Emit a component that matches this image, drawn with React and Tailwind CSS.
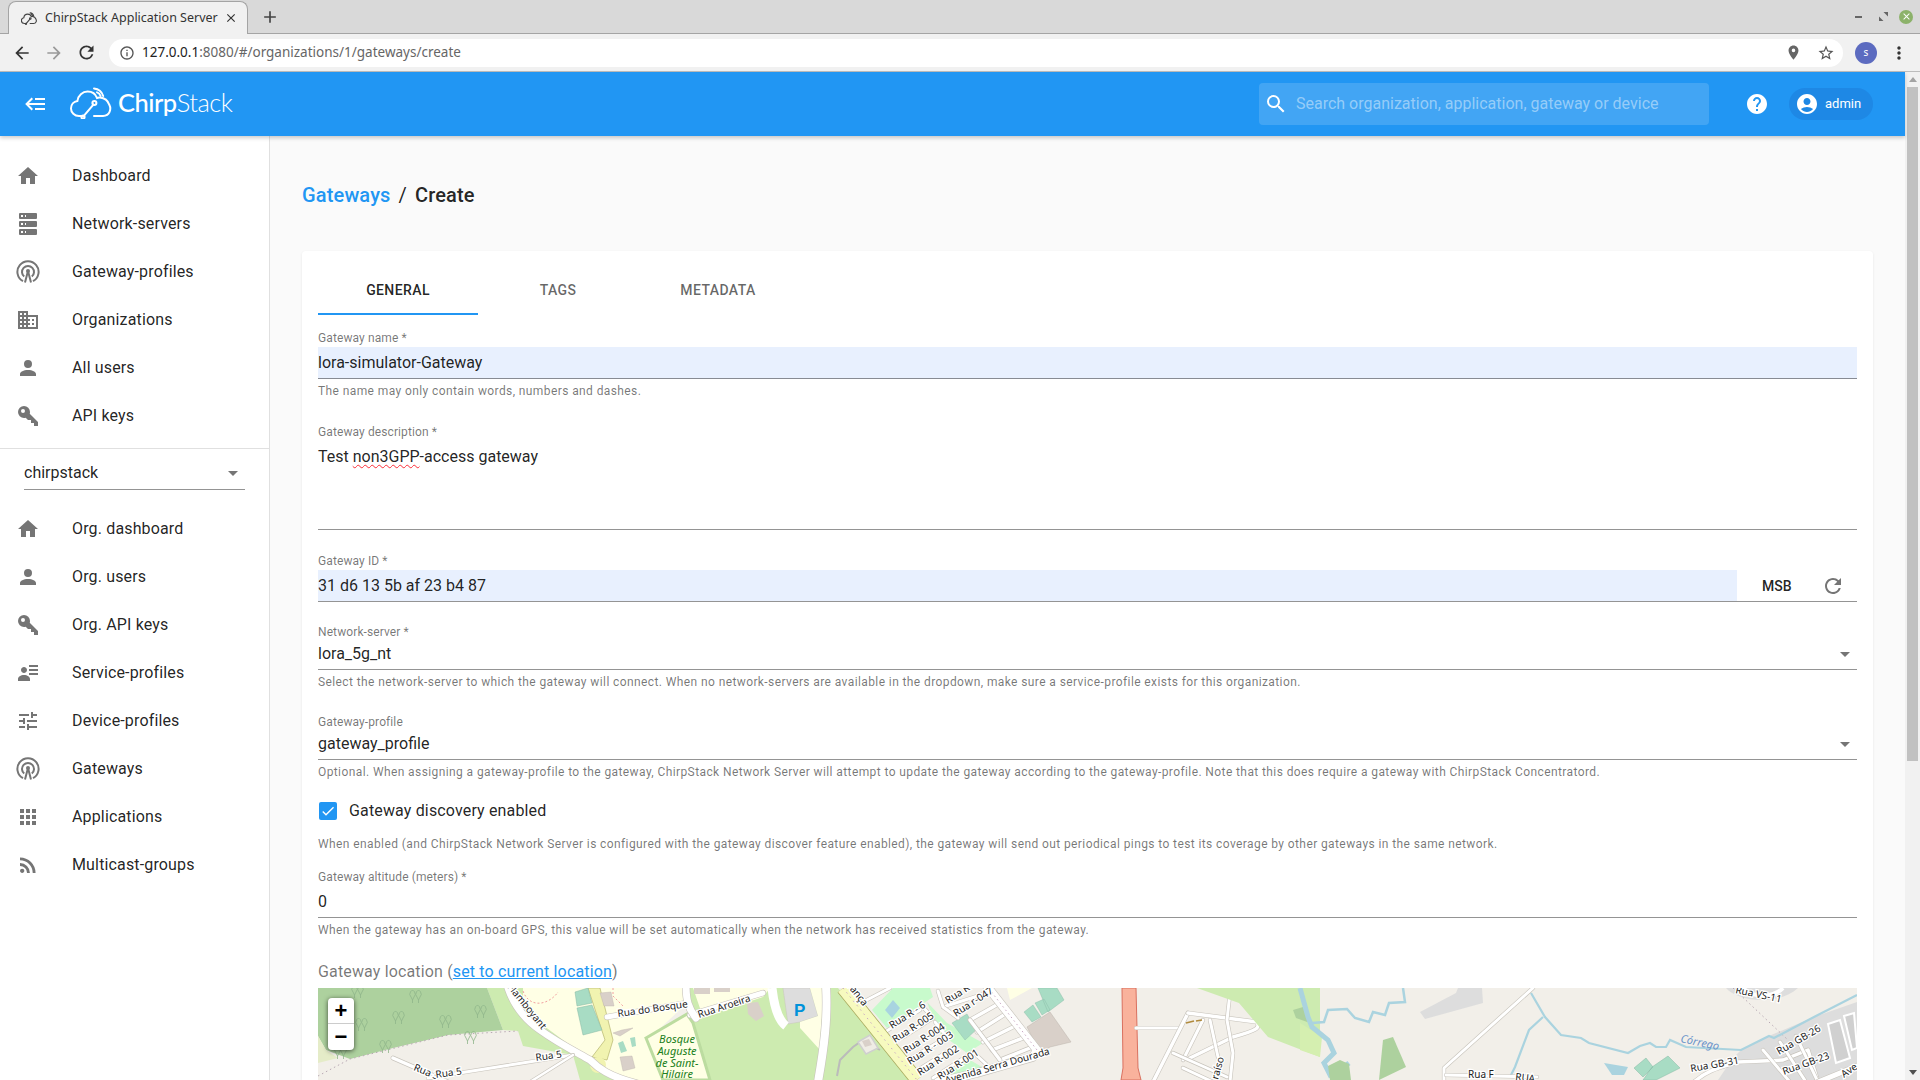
import {
  MdArrowBack, MdArrowForward, MdRefresh, MdInfoOutline, MdPlace, MdStarBorder, MdMoreVert,
  MdSearch, MdHelp, MdAccountCircle, MdClose, MdAdd, MdCheck,
} from 'react-icons/md';

const roboto = 'font-["Roboto",sans-serif]';

// mdi paths
const ICONS = {
  home: 'M10,20V14H14V20H19V12H22L12,3L2,12H5V20H10Z',
  server: 'M4,1H20A1,1 0 0,1 21,2V6A1,1 0 0,1 20,7H4A1,1 0 0,1 3,6V2A1,1 0 0,1 4,1M4,9H20A1,1 0 0,1 21,10V14A1,1 0 0,1 20,15H4A1,1 0 0,1 3,14V10A1,1 0 0,1 4,9M4,17H20A1,1 0 0,1 21,18V22A1,1 0 0,1 20,23H4A1,1 0 0,1 3,22V18A1,1 0 0,1 4,17M9,5H10V3H9V5M9,13H10V11H9V13M9,21H10V19H9V21M5,3V5H7V3H5M5,11V13H7V11H5M5,19V21H7V19H5Z',
  domain: 'M18,15H16V17H18M18,11H16V13H18M20,19H12V17H14V15H12V13H14V11H12V9H20M10,7H8V5H10M10,11H8V9H10M10,15H8V13H10M10,19H8V17H10M6,7H4V5H6M6,11H4V9H6M6,15H4V13H6M6,19H4V17H6M12,7V3H2V21H22V7H12Z',
  account: 'M12,4A4,4 0 0,1 16,8A4,4 0 0,1 12,12A4,4 0 0,1 8,8A4,4 0 0,1 12,4M12,14C16.42,14 20,15.79 20,18V20H4V18C4,15.79 7.58,14 12,14Z',
  key: 'M22,18V22H18V19H15V16H12L9.74,13.74C9.19,13.91 8.61,14 8,14A6,6 0 0,1 2,8A6,6 0 0,1 8,2A6,6 0 0,1 14,8C14,8.61 13.91,9.19 13.74,9.74L22,18M7,5A2,2 0 0,0 5,7A2,2 0 0,0 7,9A2,2 0 0,0 9,7A2,2 0 0,0 7,5Z',
  details: 'M11,9C11,10.66 9.66,12 8,12C6.34,12 5,10.66 5,9C5,7.34 6.34,6 8,6C9.66,6 11,7.34 11,9M14,20H2V18C2,15.79 4.69,14 8,14C11.31,14 14,15.79 14,18M22,12V14H13V12M22,8V10H13V8M22,4V6H13V4Z',
  tune: 'M3,17V19H9V17H3M3,5V7H13V5H3M13,21V19H21V17H13V15H11V21H13M7,9V11H3V13H7V15H9V9H7M21,13V11H11V13H21M15,9H17V7H21V5H17V3H15V9Z',
  apps: 'M16,20H20V16H16M16,14H20V10H16M10,8H14V4H10M16,8H20V4H16M10,14H14V10H10M4,14H8V10H4M4,20H8V16H4M10,20H14V16H10M4,8H8V4H4V8Z',
  rss: 'M6.18,15.64A2.18,2.18 0 0,1 8.36,17.82C8.36,19 7.38,20 6.18,20C5,20 4,19 4,17.82A2.18,2.18 0 0,1 6.18,15.64M4,4.44A15.56,15.56 0 0,1 19.56,20H16.73A12.73,12.73 0 0,0 4,7.27V4.44M4,10.1A9.9,9.9 0 0,1 13.9,20H11.07A7.07,7.07 0 0,0 4,12.93V10.1Z',
  backburger: 'M5,13L9,17L7.6,18.42L1.18,12L7.6,5.58L9,7L5,11H21V13H5M21,6V8H11V6H21M21,16V18H11V16H21Z',
};

const Mdi = ({ name, className }) => (
  <svg viewBox="0 0 24 24" className={className} fill="currentColor">
    <path d={ICONS[name]} />
  </svg>
);

// arcs over an A-frame mast
const Tower = ({ className }) => (
  <svg viewBox="0 0 24 24" className={className} fill="none" stroke="currentColor">
    <path d="M7 21.2A10.6 10.6 0 1 1 17 21.2" strokeWidth="2" />
    <path d="M8.2 16.6A6 6 0 1 1 15.8 16.6" strokeWidth="2" />
    <path d="M9 22.5L11.6 12.5H12.4L15 22.5" strokeWidth="2" />
    <circle cx="12" cy="11" r="2" fill="currentColor" stroke="none" />
  </svg>
);

const ChirpLogo = ({ className, strokeWidth = 2 }) => (
  <svg viewBox="0 0 42 32" className={className} fill="none" stroke="currentColor" strokeWidth={strokeWidth} strokeLinecap="round">
    <path d="M14 29H9C4.5 29 1 25.6 1 21.4C1 17.6 3.8 14.6 7.4 14C8 8.4 12.6 4.6 17.6 4.6C22 4.6 25.6 7.2 27 11C28 10.6 29 10.4 30 10.6C34.6 11 38 14 39.4 18C41.4 22 40 28.6 33 29H24" />
    <path d="M24 1.4C28.4 1.8 32 5 33.2 9" />
    <path d="M27 5.4C28.8 6 30 7.4 30.6 9" />
    <path d="M13.4 29.4L23.4 17.6" />
    <circle cx="24.4" cy="16" r="2" />
    <circle cx="13" cy="30" r="1.6" />
  </svg>
);

const navTop = [
  ['home', 'Dashboard'],
  ['server', 'Network-servers'],
  ['tower', 'Gateway-profiles'],
  ['domain', 'Organizations'],
  ['account', 'All users'],
  ['key', 'API keys'],
];

const navOrg = [
  ['home', 'Org. dashboard'],
  ['account', 'Org. users'],
  ['key', 'Org. API keys'],
  ['details', 'Service-profiles'],
  ['tune', 'Device-profiles'],
  ['tower', 'Gateways'],
  ['apps', 'Applications'],
  ['rss', 'Multicast-groups'],
];

const NavItem = ({ icon, label }) => (
  <div className="flex h-12 items-center pl-4 text-[16px] tracking-[0.15px] text-black/[.87]">
    {icon === 'tower' ? <Tower className="h-6 w-6 text-[#757575]" /> : <Mdi name={icon} className="h-6 w-6 text-[#757575]" />}
    <span className="ml-8">{label}</span>
  </div>
);

const Label = ({ children, className = '' }) => (
  <div className={`h-4 text-[12px] leading-4 tracking-[0.1px] text-black/[.54] ${className}`}>{children}</div>
);

const Helper = ({ children }) => (
  <div className="mt-1 h-4 text-[12px] leading-4 tracking-[0.4px] text-black/[.54]">{children}</div>
);

const Caret = () => (
  <span className="h-0 w-0 border-x-[5px] border-t-[5px] border-x-transparent border-t-[#757575]" />
);

const SelectValue = ({ value, className }) => (
  <div className={`flex items-start justify-between border-b border-black/[.42] text-[16px] leading-6 text-black/[.87] ${className}`}>
    <span>{value}</span>
    <span className="mr-[7px] mt-[10px] flex"><Caret /></span>
  </div>
);

const mapLabel = 'fill-[#222] stroke-white text-[10px] font-["Noto_Sans",sans-serif]';
const greenLabel = 'fill-[#208020] text-[11px] font-["Noto_Sans",sans-serif]';

const MapText = ({ x, y, r = 0, children }) => (
  <text
    x={x}
    y={y}
    transform={`rotate(${r} ${x} ${y})`}
    className={mapLabel}
    strokeWidth="2.5"
    paintOrder="stroke"
  >
    {children}
  </text>
);

const Road = ({ d, w = 5 }) => (
  <g fill="none" strokeLinejoin="round" strokeLinecap="round">
    <path d={d} stroke="#c8c4bc" strokeWidth={w + 1.2} />
    <path d={d} stroke="#fff" strokeWidth={w} />
  </g>
);

const trees = [[97, 9], [39, 4], [80, 30], [127, 34], [162, 24], [43, 37], [67, 59], [22, 65], [152, 50]];

// OSM tile area, drawn from the reference
const MapArt = () => (
  <svg viewBox="0 0 1539 92" className="block h-[92px] w-full" preserveAspectRatio="none">
    <rect width="1539" height="92" fill="#f2efe9" />

    {/* forest and park on the left */}
    <path d="M169 0H270L300 92H262L255 67L205 58L200 43L185 42Z" fill="#cdebb0" />
    <path d="M0 0H169L185 42L130 47L75 60L32 71L8 62L0 48Z" fill="#add19e" />
    <path d="M0 48L8 62L20 70L0 75Z" fill="#e5ecc8" />
    <path d="M0 88L32 71L130 47L200 43" fill="none" stroke="#b9a9b4" strokeWidth="1" strokeDasharray="1.5 3" />
    {trees.map(([x, y]) => (
      <g key={`${x}-${y}`} fill="none" stroke="#8fb58a" strokeWidth="0.8">
        <path d={`M${x - 4} ${y}a2.6 3.6 0 1 1 3 0l-1.5 3zM${x - 2.5} ${y + 3}v3`} />
        <path d={`M${x + 2} ${y}a2.6 3.6 0 1 1 3 0l-1.5 3zM${x + 3.5} ${y + 3}v3`} />
      </g>
    ))}

    {/* school block and bosque */}
    <path d="M205 0H372L369 15L332 50L345 92H298L272 72L226 38L205 14Z" fill="#ffffe5" />
    <path d="M368 0H520L599 92H392L372 35L369 15Z" fill="#cdebb0" />
    <path d="M328 50L369 26L375 35L392 92H345Z" fill="#ffffe5" stroke="#bcdca0" strokeWidth="3" />
    <path d="M375 0H452L445 9L385 29Z" fill="#ffffe5" />
    <path d="M270 0H282L295 52L289 72L274 69L287 52Z" fill="#f1f3b0" stroke="#a9aa5e" strokeWidth="0.6" />
    <circle cx="280" cy="77" r="8" fill="#f1f3b0" />
    <circle cx="280" cy="77" r="0.9" fill="#6a6a00" />
    <path d="M257 4L270 0L274 15L259 18ZM259 20L274 17L284 42L265 47Z" fill="#a8dcc4" stroke="#87b9a4" strokeWidth="0.5" />
    <path d="M295 45L304 42L315 40L302 48ZM302 69L314 68L317 80L305 83ZM282 5L293 4L296 18H286Z" fill="#d9d0c9" stroke="#bdb4ad" strokeWidth="0.4" />
    <path d="M300 55L305 53L309 63L303 65ZM312 50L317 49L318 58L314 59Z" fill="#a8dcc4" />
    <path d="M376 0H392V6H376ZM396 0H412V4H396ZM429 15L440 14L446 28L438 33L430 26Z" fill="#d9d0c9" />
    <path d="M205 3C212 22 232 16 240 4" fill="none" stroke="#f2a0a0" strokeWidth="1" strokeDasharray="2 2" />
    <path d="M295 0V8L305 18" fill="none" stroke="#f2a0a0" strokeWidth="1" strokeDasharray="2 2" />

    {/* Rua Flamboyant + side streets */}
    <Road d="M190 0C195 15 205 30 222 42C240 55 258 64 272 72C280 80 290 88 320 96" w={7} />
    <Road d="M75 70L130 94" w={3.5} />
    <Road d="M110 90L255 67" w={3} />
    <Road d="M255 67L212 94" w={2.5} />
    <Road d="M289 29L369 15" w={5} />
    <Road d="M372 27L445 5" w={5} />
    <Road d="M368 -4C368 12 370 20 378 30" w={7} />

    {/* parking */}
    <path d="M465 0H492L500 28L482 34L470 36Z" fill="#dddddd" stroke="#c8c4bc" strokeWidth="0.5" />
    <path d="M454 0C456 18 460 32 468 38" fill="none" stroke="#fff" strokeWidth="9" />
    <path d="M492 0H507L503 40L502 62L482 40L482 34L500 28Z" fill="#ffffe5" />
    <Road d="M508 -2C510 30 506 60 500 94" w={8} />

    <text x="359" y="55" textAnchor="middle" fontStyle="italic" className={greenLabel}>Bosque</text>
    <text x="359" y="67" textAnchor="middle" fontStyle="italic" className={greenLabel}>Auguste</text>
    <text x="359" y="79" textAnchor="middle" fontStyle="italic" className={greenLabel}>de Saint-</text>
    <text x="359" y="90" textAnchor="middle" fontStyle="italic" className={greenLabel}>Hilaire</text>
    <text x="476" y="28" className='fill-[#0092da] text-[17px] font-bold font-["Liberation_Sans",sans-serif]'>P</text>

    <MapText x={176} y={-17} r={51}>Rua Flamboyant</MapText>
    <MapText x={300} y={29} r={-8}>Rua do Bosque</MapText>
    <MapText x={381} y={30} r={-18}>Rua Aroeira</MapText>
    <MapText x={218} y={73} r={-8}>Rua 5</MapText>
    <MapText x={95} y={82} r={22}>Rua 3</MapText>
    <MapText x={118} y={90} r={-8}>Rua 5</MapText>

    {/* Esperança neighbourhood */}
    <path d="M525 0H800V92H599Z" fill="#f2efe9" />
    <path d="M554 22L575 0H612L615 9L569 40ZM609 14L629 35L665 55L649 65L620 44ZM629 85L652 72L664 79L642 92Z" fill="#c8facc" />
    <path d="M567 22L575 12L582 20L574 30Z" fill="#a8d4e0" />
    <path d="M634 35L649 26L658 42L647 52Z" fill="#a8dcc4" stroke="#87b9a4" strokeWidth="0.4" />
    <path d="M706 24L715 17L723 29L714 34ZM717 15L726 11L732 22L724 27ZM720 0H739L746 12L730 24Z" fill="#a8dcc4" stroke="#87b9a4" strokeWidth="0.4" />
    <path d="M709 39L732 24L753 54L732 59L722 65Z" fill="#d9d0c9" stroke="#bdb4ad" strokeWidth="0.5" />
    <path d="M689 0H714L692 12Z" fill="#ffffe5" />
    {['M545 14L572 0', 'M567 44L602 22', 'M584 50L615 30L604 18', 'M585 75L629 49L617 34', 'M595 85L635 60', 'M615 90L655 64L668 76', 'M625 19L669 5', 'M620 3L625 19L640 30'].map((d) => (
      <Road key={d} d={d} w={3} />
    ))}
    {['M652 32L682 15', 'M659 44L689 25', 'M665 54L695 39', 'M674 62L705 50', 'M682 72L712 60', 'M652 32L682 72'].map((d) => (
      <Road key={d} d={d} w={3.5} />
    ))}
    <Road d="M668 -3L719 62L715 69L659 85L620 94" w={8} />
    <path d="M668 -3L719 62" fill="none" stroke="#c9a9c4" strokeWidth="1" strokeDasharray="1.5 3" />
    <path d="M525 0L599 92" fill="none" stroke="#a9aa5e" strokeWidth="14" />
    <path d="M525 0L599 92" fill="none" stroke="#f7fabf" strokeWidth="12.5" />
    <path d="M525 0L599 92" fill="none" stroke="#c9a9c4" strokeWidth="1" strokeDasharray="1.5 4" />
    <path d="M519 88L522 72L535 59L545 52L562 62" fill="none" stroke="#bbb" strokeWidth="2" />
    <path d="M540 54L552 47L560 60L548 66Z" fill="#efece5" stroke="#cfcfcf" strokeWidth="1.5" />
    <path d="M544 53L551 51L554 57L547 59Z" fill="#d9d0c9" />
    <MapText x={515} y={-19} r={51}>Esperança</MapText>
    <MapText x={574} y={41} r={-33}>Rua R - 6</MapText>
    <MapText x={577} y={55} r={-33}>Rua R-005</MapText>
    <MapText x={588} y={66} r={-33}>Rua R-004</MapText>
    <MapText x={592} y={77} r={-33}>Rua R - 003</MapText>
    <MapText x={602} y={88} r={-33}>Rua R-002</MapText>
    <MapText x={622} y={92} r={-33}>Rua R-001</MapText>
    <MapText x={630} y={16} r={-33}>Rua R-0</MapText>
    <MapText x={638} y={29} r={-33}>Rua r-047</MapText>
    <MapText x={628} y={96} r={-16}>Avenida Serra Dourada</MapText>

    {/* trunk road and the small town */}
    <path d="M804 0H818L820 80L823 92H803L805 80Z" fill="#f9b29c" stroke="#d9705f" strokeWidth="1" />
    <Road d="M818 40H862" w={3} />
    <Road d="M870 25L835 94" w={3.5} />
    <Road d="M870 25L939 34C942 40 940 42 915 49L872 70" w={3.5} />
    <Road d="M885 32L865 72M892 32L900 69" w={3} />
    <Road d="M912 5L909 32L915 65L912 94" w={3} />
    <Road d="M855 65L909 89M865 80L895 94" w={3} />
    <path d="M868 35L876 33M878 33L884 32" stroke="#b08a3c" strokeWidth="1.5" />
    <MapText x={900} y={92} r={-75}>raíso</MapText>

    {/* park and river */}
    <path d="M879 0H1002V69L950 49L921 15Z" fill="#cdebb0" />
    <path d="M975 22L985 19L992 35L978 30Z" fill="#add19e" />
    <path d="M982 35L1004 49L1002 69L982 62Z" fill="#d5efb0" />
    <path d="M982 0L990 29L994 39L1010 52L1016 65L1006 75L1012 87L1022 82L1031 75" fill="none" stroke="#aad3df" strokeWidth="5" />
    <path d="M1010 78L1022 72L1031 76L1033 92H1012Z" fill="#add19e" />
    <path d="M994 35L1006 34L1010 22L1029 21L1037 30L1051 34L1055 24L1067 27L1071 15L1087 14L1085 0" fill="none" stroke="#aad3df" strokeWidth="2.5" />
    <path d="M1065 52L1075 49L1088 79L1061 92Z" fill="#add19e" />
    <path d="M1140 0H1164L1165 15L1107 31L1102 24L1138 5Z" fill="#dddddd" />

    {/* right-hand housing, under the streams */}
    <path d="M1423 62L1451 48L1496 29L1539 14V92H1400L1415 70Z" fill="#dddddd" />
    <path d="M1408 0C1420 14 1460 18 1480 0Z" fill="#dddddd" />
    <path d="M1425 0C1435 10 1455 10 1465 0" fill="none" stroke="#fff" strokeWidth="4" />
    <path d="M1510 36L1522 32L1532 70L1518 75ZM1526 28L1536 25L1539 60L1534 62Z" fill="#d0d0d0" stroke="#fff" strokeWidth="2" />
    <path d="M1415 0L1470 52" fill="none" stroke="#b9a9b4" strokeWidth="1" strokeDasharray="1.5 3" />

    {/* streams and Córrego */}
    <path d="M1213 5L1227 29L1243 47L1263 50L1271 55L1310 65L1322 58L1332 55L1338 59L1348 59L1352 52L1368 59L1423 62L1451 48L1456 50L1496 29L1539 7" fill="none" stroke="#aad3df" strokeWidth="2.2" />
    <path d="M1225 29L1211 42L1197 79L1192 89" fill="none" stroke="#aad3df" strokeWidth="2.2" />
    <Road d="M1215 0L1126 80V94" w={3} />
    <Road d="M1128 87L1219 89" w={3} />
    <text x="1362" y="54" transform="rotate(12 1362 54)" fontStyle="italic" className='fill-[#6a93c9] text-[11px] font-["Noto_Sans",sans-serif]'>Córrego</text>

    <Road d="M1376 94C1390 82 1400 80 1420 74L1465 72L1490 62L1500 94" w={3.5} />
    <Road d="M1445 62L1472 94M1462 54L1488 94M1478 48L1500 94" w={3} />
    <Road d="M1500 94L1539 78" w={5} />
    <path d="M1286 75L1310 79L1306 87L1294 87Z" fill="#aad3df" />
    <path d="M1316 80L1328 70L1335 79L1325 89ZM1334 79L1350 68L1362 80L1338 92H1325Z" fill="#a8dcc4" stroke="#87b9a4" strokeWidth="0.5" />
    <MapText x={1417} y={5} r={12}>Rua VS-11</MapText>
    <MapText x={1373} y={84} r={-10}>Rua GB-31</MapText>
    <MapText x={1461} y={67} r={-30}>Rua GB-26</MapText>
    <MapText x={1466} y={87} r={-20}>Rua GB-23</MapText>
    <MapText x={1526} y={90} r={-35}>Ave</MapText>
    <MapText x={1150} y={90}>Rua F</MapText>
    <MapText x={1197} y={92} r={6}>RUA</MapText>
  </svg>
);

const BrowserChrome = () => (
  <div className='shrink-0 font-["Noto_Sans",sans-serif]'>
    <div className="flex h-[34px] items-end border-b border-[#a4a4a4] bg-[#d9d9d9] pl-2">
      <div className="-mb-px flex h-[33px] w-[240px] items-center rounded-t-lg border border-b-0 border-[#a4a4a4] bg-[#f1f1f1] pl-3 text-[12.5px] text-[#333]">
        <ChirpLogo className="h-[13px] w-[16px] text-[#444]" strokeWidth={3} />
        <span className="ml-2 w-[176px] truncate">ChirpStack Application Server</span>
        <MdClose className="ml-[3px] h-[14px] w-[14px] text-[#333]" />
      </div>
      <div className="ml-[12px] flex h-[33px] items-center">
        <MdAdd className="h-5 w-5 text-[#444]" />
      </div>
      <div className="ml-auto flex h-[33px] items-center pr-[7px]">
        <span className="mr-[17px] h-[2px] w-[7px] bg-[#666]" />
        <svg viewBox="0 0 10 10" className="mr-[11px] h-[9px] w-[9px]" fill="#666">
          <path d="M5 0H10V5ZM5 10H0V5Z" />
        </svg>
        <span className="flex h-[14px] w-[14px] items-center justify-center rounded-full bg-[#8cb26a]">
          <MdClose className="h-[11px] w-[11px] text-white" />
        </span>
      </div>
    </div>
    <div className="flex h-[38px] items-center border-b border-[#bdbdbd] bg-[#f1f1f1]">
      <MdArrowBack className="ml-[12px] h-5 w-5 text-[#333]" />
      <MdArrowForward className="ml-[12px] h-5 w-5 text-[#999]" />
      <MdRefresh className="ml-[12px] h-[21px] w-[21px] text-[#333]" />
      <div className="ml-[12px] flex h-[28px] w-[1734px] items-center rounded-full bg-white pl-[10px] text-[13.5px]">
        <MdInfoOutline className="h-4 w-4 text-[#555]" />
        <span className="ml-[7px] text-[#222]">127.0.0.1</span>
        <span className="text-[#666]">:8080/#/organizations/1/gateways/create</span>
        <MdPlace className="ml-auto h-[17px] w-[17px] text-[#666]" />
        <MdStarBorder className="ml-[15px] mr-[8px] h-[18px] w-[18px] text-[#555]" />
      </div>
      <span className="ml-[12px] flex h-[22px] w-[22px] items-center justify-center rounded-full bg-[#5c6bc0] text-[10px] text-white">s</span>
      <MdMoreVert className="ml-[12px] h-5 w-5 text-[#333]" />
    </div>
  </div>
);

const AppHeader = () => (
  <div className="relative z-10 flex h-16 shrink-0 items-center bg-[#2196f3] shadow-[0_2px_4px_rgba(0,0,0,0.2)]">
    <Mdi name="backburger" className="ml-6 h-6 w-6 text-white" />
    <ChirpLogo className="ml-[22px] -mt-[2px] h-[32px] w-[42px] text-white" />
    <span className='ml-[6px] -mt-[3px] w-[114px] whitespace-nowrap text-[25.5px] font-medium tracking-[-0.5px] text-white font-["Lato",sans-serif]'>
      Chirp<span className="font-light">Stack</span>
    </span>
    <div className="ml-[1027px] flex h-[42px] w-[450px] items-center rounded-[4px] bg-white/[.15]">
      <MdSearch className="ml-[5px] h-[24px] w-[24px] text-white" />
      <span className="ml-[8px] text-[16px] text-white/[.45]">Search organization, application, gateway or device</span>
    </div>
    <MdHelp className="ml-[36px] h-6 w-6 text-white" />
    <div className="ml-[20px] flex h-8 w-[84px] items-center rounded-full bg-[#1e88e5] pl-[6px] text-[13px] text-white">
      <MdAccountCircle className="h-6 w-6 text-white" />
      <span className="ml-[6px]">admin</span>
    </div>
  </div>
);

const Sidebar = () => (
  <div className="w-[270px] shrink-0 border-r border-[#e0e0e0] bg-white">
    <div className="pt-4 pb-2">
      {navTop.map(([icon, label]) => <NavItem key={label} icon={icon} label={label} />)}
    </div>
    <div className="h-px bg-[#e0e0e0]" />
    <div className="pl-6 pr-6">
      <SelectValue value="chirpstack" className="mt-[12px] h-[29px]" />
    </div>
    <div className="pt-[15px]">
      {navOrg.map(([icon, label]) => <NavItem key={label} icon={icon} label={label} />)}
    </div>
  </div>
);

const Tab = ({ children, active }) => (
  <div className={`flex h-12 w-40 items-center justify-center border-b-2 pt-px text-[14px] font-medium tracking-[0.4px] ${active ? 'border-[#2196f3] text-black/[.87]' : 'border-transparent text-black/[.6]'}`}>
    {children}
  </div>
);

const GatewayForm = () => (
  <div className="mt-[42px] rounded-t bg-white px-4 pt-4 shadow-[0_1px_3px_rgba(0,0,0,0.08)]">
    <div className="flex">
      <Tab active>GENERAL</Tab>
      <Tab>TAGS</Tab>
      <Tab>METADATA</Tab>
    </div>

    <Label className="mt-[15px]">Gateway name *</Label>
    <div className="mt-px h-8 border-b border-black/[.42] bg-[#e8f0fe] text-[16px] leading-8 text-black/[.87]">lora-simulator-Gateway</div>
    <Helper>The name may only contain words, numbers and dashes.</Helper>

    <Label className="mt-[25px]">Gateway description *</Label>
    <div className="h-[90px] border-b border-black/[.42] pt-[5px] text-[16px] leading-6 text-black/[.87]">
      Test <span className="underline decoration-red-500 decoration-wavy decoration-1 underline-offset-2">non3GPP</span>-access gateway
    </div>

    <Label className="mt-[23px]">Gateway ID *</Label>
    <div className="mt-px flex h-8 border-b border-black/[.42] text-[16px] leading-8 text-black/[.87]">
      <div className="w-[1419px] bg-[#e8f0fe]">31 d6 13 5b af 23 b4 87</div>
      <span className="ml-[25px] text-[14px] font-medium">MSB</span>
      <MdRefresh className="ml-[29px] mt-1 h-6 w-6 text-[#757575]" />
    </div>

    <Label className="mt-[22px]">Network-server *</Label>
    <SelectValue value="lora_5g_nt" className="h-[30px] pt-[2px]" />
    <Helper>Select the network-server to which the gateway will connect. When no network-servers are available in the dropdown, make sure a service-profile exists for this organization.</Helper>

    <Label className="mt-[24px]">Gateway-profile</Label>
    <SelectValue value="gateway_profile" className="h-[30px] pt-[2px]" />
    <Helper>Optional. When assigning a gateway-profile to the gateway, ChirpStack Network Server will attempt to update the gateway according to the gateway-profile. Note that this does require a gateway with ChirpStack Concentratord.</Helper>

    <div className="mt-[19px] flex h-6 items-center text-[16px] tracking-[0.15px] text-black/[.87]">
      <span className="ml-px flex h-[18px] w-[18px] items-center justify-center rounded-[2px] bg-[#2196f3]">
        <MdCheck className="h-4 w-4 text-white" />
      </span>
      <span className="ml-3">Gateway discovery enabled</span>
    </div>
    <div className="mt-[13px] h-4 text-[12px] leading-4 tracking-[0.4px] text-black/[.54]">
      When enabled (and ChirpStack Network Server is configured with the gateway discover feature enabled), the gateway will send out periodical pings to test its coverage by other gateways in the same network.
    </div>

    <Label className="mt-[17px]">Gateway altitude (meters) *</Label>
    <div className="h-[33px] border-b border-black/[.42] pt-[5px] text-[16px] leading-6 text-black/[.87]">0</div>
    <Helper>When the gateway has an on-board GPS, this value will be set automatically when the network has received statistics from the gateway.</Helper>

    <div className="mt-[22px] h-6 text-[16px] leading-6 tracking-[0.15px] text-black/[.54]">
      Gateway location (<span className="text-[#2196f3] underline">set to current location</span>)
    </div>
    <div className="relative mt-1 h-[92px] overflow-hidden">
      <MapArt />
      <div className="absolute left-[10px] top-[10px] flex w-[26px] flex-col rounded bg-white text-black shadow-[0_1px_5px_rgba(0,0,0,0.65)] font-['Liberation_Sans',sans-serif]">
        <span className="flex h-[26px] items-center justify-center border-b border-[#ccc] text-[22px] font-bold leading-none">+</span>
        <span className="flex h-[26px] items-center justify-center text-[22px] font-bold leading-none">−</span>
      </div>
    </div>
  </div>
);

const Scrollbar = () => (
  <div className="flex w-[15px] shrink-0 flex-col items-center bg-[#f1f1f1]">
    <span className="mt-[5px] h-0 w-0 border-x-[4px] border-b-[5px] border-x-transparent border-b-[#a3a3a3]" />
    <span className="mt-[5px] h-[674px] w-[11px] bg-[#c1c1c1]" />
    <span className="mt-auto mb-[5px] h-0 w-0 border-x-[4px] border-t-[5px] border-x-transparent border-t-[#505050]" />
  </div>
);

export default function App() {
  return (
    <div className={`flex h-screen w-full flex-col overflow-hidden bg-white ${roboto}`}>
      <BrowserChrome />
      <div className="flex min-h-0 flex-1">
        <div className="flex min-w-0 flex-1 flex-col">
          <AppHeader />
          <div className="flex min-h-0 flex-1">
            <Sidebar />
            <div className="min-w-0 flex-1 overflow-hidden bg-[#fafafa] px-8 pt-[45px]">
              <div className="flex h-7 items-center text-[20px] font-medium leading-7 tracking-[0.15px]">
                <span className="text-[#2196f3]">Gateways</span>
                <span className="mx-2 font-normal text-black/[.87]">/</span>
                <span className="text-black/[.87]">Create</span>
              </div>
              <GatewayForm />
            </div>
          </div>
        </div>
        <Scrollbar />
      </div>
    </div>
  );
}
